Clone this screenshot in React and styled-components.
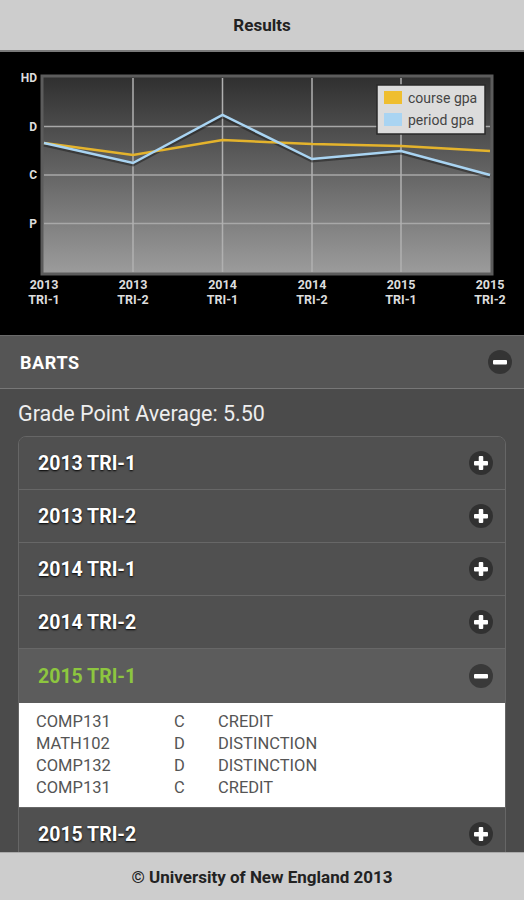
import React from "react";
import styled, { createGlobalStyle } from "styled-components";

const Global = createGlobalStyle`
  body {
    margin: 0;
    background: #4b4b4b;
    font-family: Roboto, "Liberation Sans", sans-serif;
  }
`;

const Page = styled.div`
  display: flex;
  flex-direction: column;
  min-height: 900px;
`;

const TopBar = styled.header`
  height: 50px;
  display: flex;
  align-items: center;
  justify-content: center;
  background: #cdcdcd;
  border-bottom: 2px solid #7a7a7a;
  font-size: 17px;
  font-weight: 700;
  color: #222;
`;

const ChartPanel = styled.div`
  background: #000;
  height: 283px;
`;

const Section = styled.section`
  border-top: 1px solid #6a6a6a;
`;

const SectionHead = styled.div`
  height: 52px;
  display: flex;
  align-items: center;
  justify-content: space-between;
  padding: 0 12px 0 20px;
  background: #555;
  border-bottom: 1px solid #777;
  color: #fff;
  font-size: 18px;
  letter-spacing: 0.6px;
  font-weight: 700;
`;

const Gpa = styled.div`
  padding: 13px 18px 10px;
  font-size: 21.5px;
  line-height: 24px;
  color: #eee;
`;

const Accordion = styled.div`
  margin: 0 18px 60px;
  border: 1px solid #666;
  border-radius: 8px 8px 0 0;
  overflow: hidden;
`;

const Item = styled.div`
  & + & {
    border-top: 1px solid #676767;
  }
`;

const ItemHead = styled.div`
  height: ${(p) => (p.$open ? "54px" : "52px")};
  display: flex;
  align-items: center;
  justify-content: space-between;
  padding: 0 12px 0 19px;
  background: ${(p) => (p.$open ? "#5c5c5c" : "#505050")};
  color: ${(p) => (p.$open ? "#8dc63f" : "#fff")};
  font-size: 19.5px;
  font-weight: 700;
  text-shadow: ${(p) => (p.$open ? "none" : "0 1px 2px #000")};
`;

const Body = styled.div`
  background: #fff;
  padding: 8px 17px;
`;

const Result = styled.div`
  display: grid;
  grid-template-columns: 138px 44px 1fr;
  font-size: 16.5px;
  line-height: 22px;
  color: #555;
`;

const Footer = styled.footer`
  position: fixed;
  left: 0;
  right: 0;
  bottom: 0;
  height: 47px;
  display: flex;
  align-items: center;
  justify-content: center;
  background: #cdcdcd;
  border-top: 1px solid #aaa;
  font-size: 17px;
  font-weight: 700;
  color: #222;
`;

function Toggle({ open }) {
  return (
    <svg width="24" height="24" viewBox="0 0 24 24">
      <circle cx="12" cy="12" r="12" fill="rgba(0,0,0,0.38)" />
      <rect x="5" y="10" width="14" height="4.5" rx="1" fill="#fff" />
      {!open && <rect x="9.75" y="5" width="4.5" height="14" rx="1" fill="#fff" />}
    </svg>
  );
}

const xs = [44, 133, 222.5, 312, 401, 490];
const ys = [26, 74.5, 123, 171.5, 220];
const course = [91, 103, 88, 92, 94, 99];
const period = [91, 111, 63, 107, 99, 123];
const terms = ["2013 TRI-1", "2013 TRI-2", "2014 TRI-1", "2014 TRI-2", "2015 TRI-1", "2015 TRI-2"];

const pts = (arr) => arr.map((y, i) => `${xs[i]},${y}`).join(" ");

function Chart() {
  return (
    <svg width="524" height="283" viewBox="0 0 524 283">
      <defs>
        <linearGradient id="plot" x1="0" y1="0" x2="0" y2="1">
          <stop offset="0" stopColor="#2f2f2f" />
          <stop offset="1" stopColor="#9c9c9c" />
        </linearGradient>
      </defs>
      <rect x="42" y="24" width="450" height="198" fill="url(#plot)" stroke="#5c5c5c" strokeWidth="3" />
      {ys.slice(1, 4).map((y) => (
        <line key={y} x1="44" x2="490" y1={y} y2={y} stroke="#a8a8a8" strokeWidth="1.5" />
      ))}
      {xs.slice(1, 5).map((x) => (
        <line key={x} x1={x} x2={x} y1="26" y2="220" stroke="#b0b0b0" strokeWidth="1.5" />
      ))}
      <g fontFamily="Roboto, sans-serif" fontWeight="700" fontSize="12" fill="#ddd" textAnchor="end">
        {["HD", "D", "C", "P"].map((t, i) => (
          <text key={t} x="37" y={ys[i] + 4}>{t}</text>
        ))}
      </g>
      <g fontFamily="Roboto, sans-serif" fontWeight="700" fontSize="12.5" fill="#ddd" textAnchor="middle">
        {terms.map((t, i) => (
          <text key={t} x={xs[i]}>
            <tspan x={xs[i]} y="237">{t.split(" ")[0]}</tspan>
            <tspan x={xs[i]} y="252">{t.split(" ")[1]}</tspan>
          </text>
        ))}
      </g>
      <polyline points={pts(period)} fill="none" stroke="#1a1a1a" strokeWidth="4" opacity="0.5" transform="translate(0 1.5)" />
      <polyline points={pts(course)} fill="none" stroke="#e4b32c" strokeWidth="2.5" />
      <polyline points={pts(period)} fill="none" stroke="#a9d4f2" strokeWidth="2.5" />
      <rect x="377" y="33" width="108" height="49" fill="#dcdcdc" stroke="#2a2a2a" strokeWidth="1.5" />
      <rect x="384" y="39" width="18" height="13" fill="#efbe2f" />
      <rect x="384" y="61" width="18" height="13" fill="#a9d4f2" />
      <g fontFamily="Roboto, sans-serif" fontSize="14" fill="#444">
        <text x="408" y="51">course gpa</text>
        <text x="408" y="73">period gpa</text>
      </g>
    </svg>
  );
}

const results = [
  ["COMP131", "C", "CREDIT"],
  ["MATH102", "D", "DISTINCTION"],
  ["COMP132", "D", "DISTINCTION"],
  ["COMP131", "C", "CREDIT"],
];

export default function App() {
  return (
    <Page>
      <Global />
      <TopBar>Results</TopBar>
      <ChartPanel>
        <Chart />
      </ChartPanel>
      <Section>
        <SectionHead>
          BARTS
          <Toggle open />
        </SectionHead>
        <Gpa>Grade Point Average: 5.50</Gpa>
        <Accordion>
          {terms.map((t) => {
            const open = t === "2015 TRI-1";
            return (
              <Item key={t}>
                <ItemHead $open={open}>
                  {t}
                  <Toggle open={open} />
                </ItemHead>
                {open && (
                  <Body>
                    {results.map((r, i) => (
                      <Result key={i}>
                        <span>{r[0]}</span>
                        <span>{r[1]}</span>
                        <span>{r[2]}</span>
                      </Result>
                    ))}
                  </Body>
                )}
              </Item>
            );
          })}
        </Accordion>
      </Section>
      <Footer>© University of New England 2013</Footer>
    </Page>
  );
}
